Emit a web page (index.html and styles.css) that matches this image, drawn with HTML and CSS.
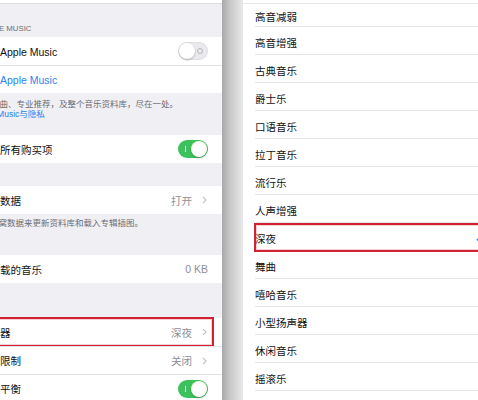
FILE: index.html
```html
<!DOCTYPE html>
<html lang="zh-CN">
<head>
    <meta charset="UTF-8">
    <meta name="viewport" content="width=device-width, initial-scale=1.0">
    <title>音乐设置 - 均衡器</title>
    <link rel="stylesheet" href="styles.css">
</head>
<body>
    <div class="screen left">
        <div class="left-inner">
            <div class="cell-tail"></div>

            <div class="group-header">Apple Music</div>
            <div class="group">
                <div class="row">
                    <span class="label">显示Apple Music</span>
                    <span class="toggle off"><span class="knob"></span></span>
                </div>
                <div class="row">
                    <span class="label link">加入Apple Music</span>
                </div>
            </div>
            <div class="group-footer footer-music">
                <div class="line shift-a">歌曲、专业推荐，及整个音乐资料库，尽在一处。</div>
                <div class="line shift-b"><span class="link">Apple Music与隐私</span></div>
            </div>

            <div class="group">
                <div class="row">
                    <span class="label">显示所有购买项</span>
                    <span class="toggle on"><span class="knob"></span></span>
                </div>
            </div>
            <div class="spacer spacer-sm"></div>

            <div class="group">
                <div class="row">
                    <span class="label">蜂窝数据</span>
                    <span class="value">打开</span>
                    <svg class="chevron" viewBox="0 0 5 8"><path d="M1 1l3 3-3 3"/></svg>
                </div>
            </div>
            <div class="group-footer footer-data">
                <div class="line shift-c">使用蜂窝数据来更新资料库和载入专辑插图。</div>
            </div>

            <div class="group">
                <div class="row">
                    <span class="label">已下载的音乐</span>
                    <span class="value plain">0 KB</span>
                </div>
            </div>
            <div class="spacer spacer-lg"></div>

            <div class="group">
                <div class="row marked">
                    <span class="label">均衡器</span>
                    <span class="value">深夜</span>
                    <svg class="chevron" viewBox="0 0 5 8"><path d="M1 1l3 3-3 3"/></svg>
                </div>
                <div class="row">
                    <span class="label">音量限制</span>
                    <span class="value">关闭</span>
                    <svg class="chevron" viewBox="0 0 5 8"><path d="M1 1l3 3-3 3"/></svg>
                </div>
                <div class="row">
                    <span class="label">音量平衡</span>
                    <span class="toggle on"><span class="knob"></span></span>
                </div>
            </div>
        </div>
    </div>

    <div class="gap"></div>

    <div class="screen right">
        <div class="list-top"></div>
        <div class="opt first">高音减弱</div>
        <div class="opt">高音增强</div>
        <div class="opt">古典音乐</div>
        <div class="opt">爵士乐</div>
        <div class="opt">口语音乐</div>
        <div class="opt">拉丁音乐</div>
        <div class="opt">流行乐</div>
        <div class="opt">人声增强</div>
        <div class="opt marked">
            <span>深夜</span>
            <svg class="check" viewBox="0 0 10 8"><path d="M1 4l3 3 5-6"/></svg>
        </div>
        <div class="opt">舞曲</div>
        <div class="opt">嘻哈音乐</div>
        <div class="opt">小型扬声器</div>
        <div class="opt">休闲音乐</div>
        <div class="opt">摇滚乐</div>
        <div class="opt">电子乐</div>
    </div>
</body>
</html>
```

FILE: styles.css
```css
body {
    margin: 0;
    width: 478px;
    height: 400px;
    overflow: hidden;
    display: flex;
    font-family: "Liberation Sans", "Noto Sans CJK SC", sans-serif;
    font-size: 10.5px;
    color: #111;
    background: #efeff4;
}
.screen {
    height: 400px;
    overflow: hidden;
}
.left {
    width: 222px;
    flex: none;
    background: #efeff4;
}
.left-inner {
    margin-left: -21px;
}
.cell-tail {
    height: 3px;
    background: #fff;
    border-bottom: 1px solid #dcdce0;
}
.group-header {
    height: 33px;
    box-sizing: border-box;
    display: flex;
    align-items: flex-end;
    padding-bottom: 4px;
    font-size: 7.8px;
    text-transform: uppercase;
    color: #6d6d72;
}
.group {
    background: #fff;
}
.row {
    position: relative;
    height: 28px;
    box-sizing: border-box;
    display: flex;
    align-items: center;
    padding-right: 14px;
    white-space: nowrap;
}
.row + .row {
    border-top: 1px solid #e3e3e7;
}
.label {
    flex: 1;
}
.link {
    color: #2a82f2;
}
.value {
    color: #8e8e93;
}
.chevron {
    width: 5px;
    height: 8px;
    margin-left: 10px;
    margin-right: 1px;
    fill: none;
    stroke: #c4c4c9;
    stroke-width: 1.1;
}
.toggle {
    position: relative;
    width: 30px;
    height: 18px;
    border-radius: 9px;
    box-sizing: border-box;
}
.toggle .knob {
    position: absolute;
    top: 1px;
    width: 16px;
    height: 16px;
    border-radius: 50%;
    background: #fff;
    box-shadow: 0 1px 2px rgba(0, 0, 0, 0.25);
}
.toggle.off {
    background: #e9e9ee;
    border: 1px solid #dedee3;
}
.toggle.off .knob {
    top: 0;
    left: 0;
}
.toggle.off::after {
    content: "";
    position: absolute;
    right: 4px;
    top: 5px;
    width: 4px;
    height: 4px;
    border: 1px solid #b6b6bb;
    border-radius: 50%;
}
.toggle.on {
    background: #3cc25a;
}
.toggle.on .knob {
    right: 1px;
}
.toggle.on::after {
    content: "";
    position: absolute;
    left: 7px;
    top: 6px;
    width: 1px;
    height: 6px;
    background: #fff;
}
.group-footer {
    font-size: 8.5px;
    line-height: 10px;
    color: #6d6d72;
    white-space: nowrap;
}
.footer-music {
    padding: 6px 0 16px;
}
.footer-data {
    padding: 4px 0 27px;
}
.shift-a {
    padding-left: 12px;
}
.shift-b {
    margin-left: -6px;
}
.shift-c {
    margin-left: -6px;
}
.spacer-sm {
    height: 23px;
}
.spacer-lg {
    height: 35px;
}
.marked::after {
    content: "";
    position: absolute;
    top: -1px;
    bottom: -1px;
    left: 0;
    right: 8px;
    border: 2px solid #cf2233;
    box-shadow: inset 0 0 0 1px rgba(230, 120, 130, 0.35);
    pointer-events: none;
}
.gap {
    width: 21px;
    flex: none;
    height: 400px;
    background: linear-gradient(to right, #a8a8a8, #c6c6c6 35%, #dedede 80%, #eaeaea);
}
.right {
    flex: 1;
    background: #fff;
    position: relative;
}
.list-top {
    height: 3px;
    border-bottom: 1px solid #e6e6ea;
}
.opt {
    position: relative;
    height: 28px;
    box-sizing: border-box;
    margin-left: 12px;
    padding-top: 4px;
    display: flex;
    align-items: center;
    justify-content: space-between;
    border-bottom: 1px solid #e6e6ea;
    white-space: nowrap;
}
.opt.first {
    height: 23px;
    padding-top: 2px;
}
.opt.marked::after {
    left: -1px;
    right: -10px;
    top: 0;
    bottom: -2px;
}
.check {
    width: 10px;
    height: 8px;
    margin-right: -8px;
    fill: none;
    stroke: #2a82f2;
    stroke-width: 1.6;
}
```
